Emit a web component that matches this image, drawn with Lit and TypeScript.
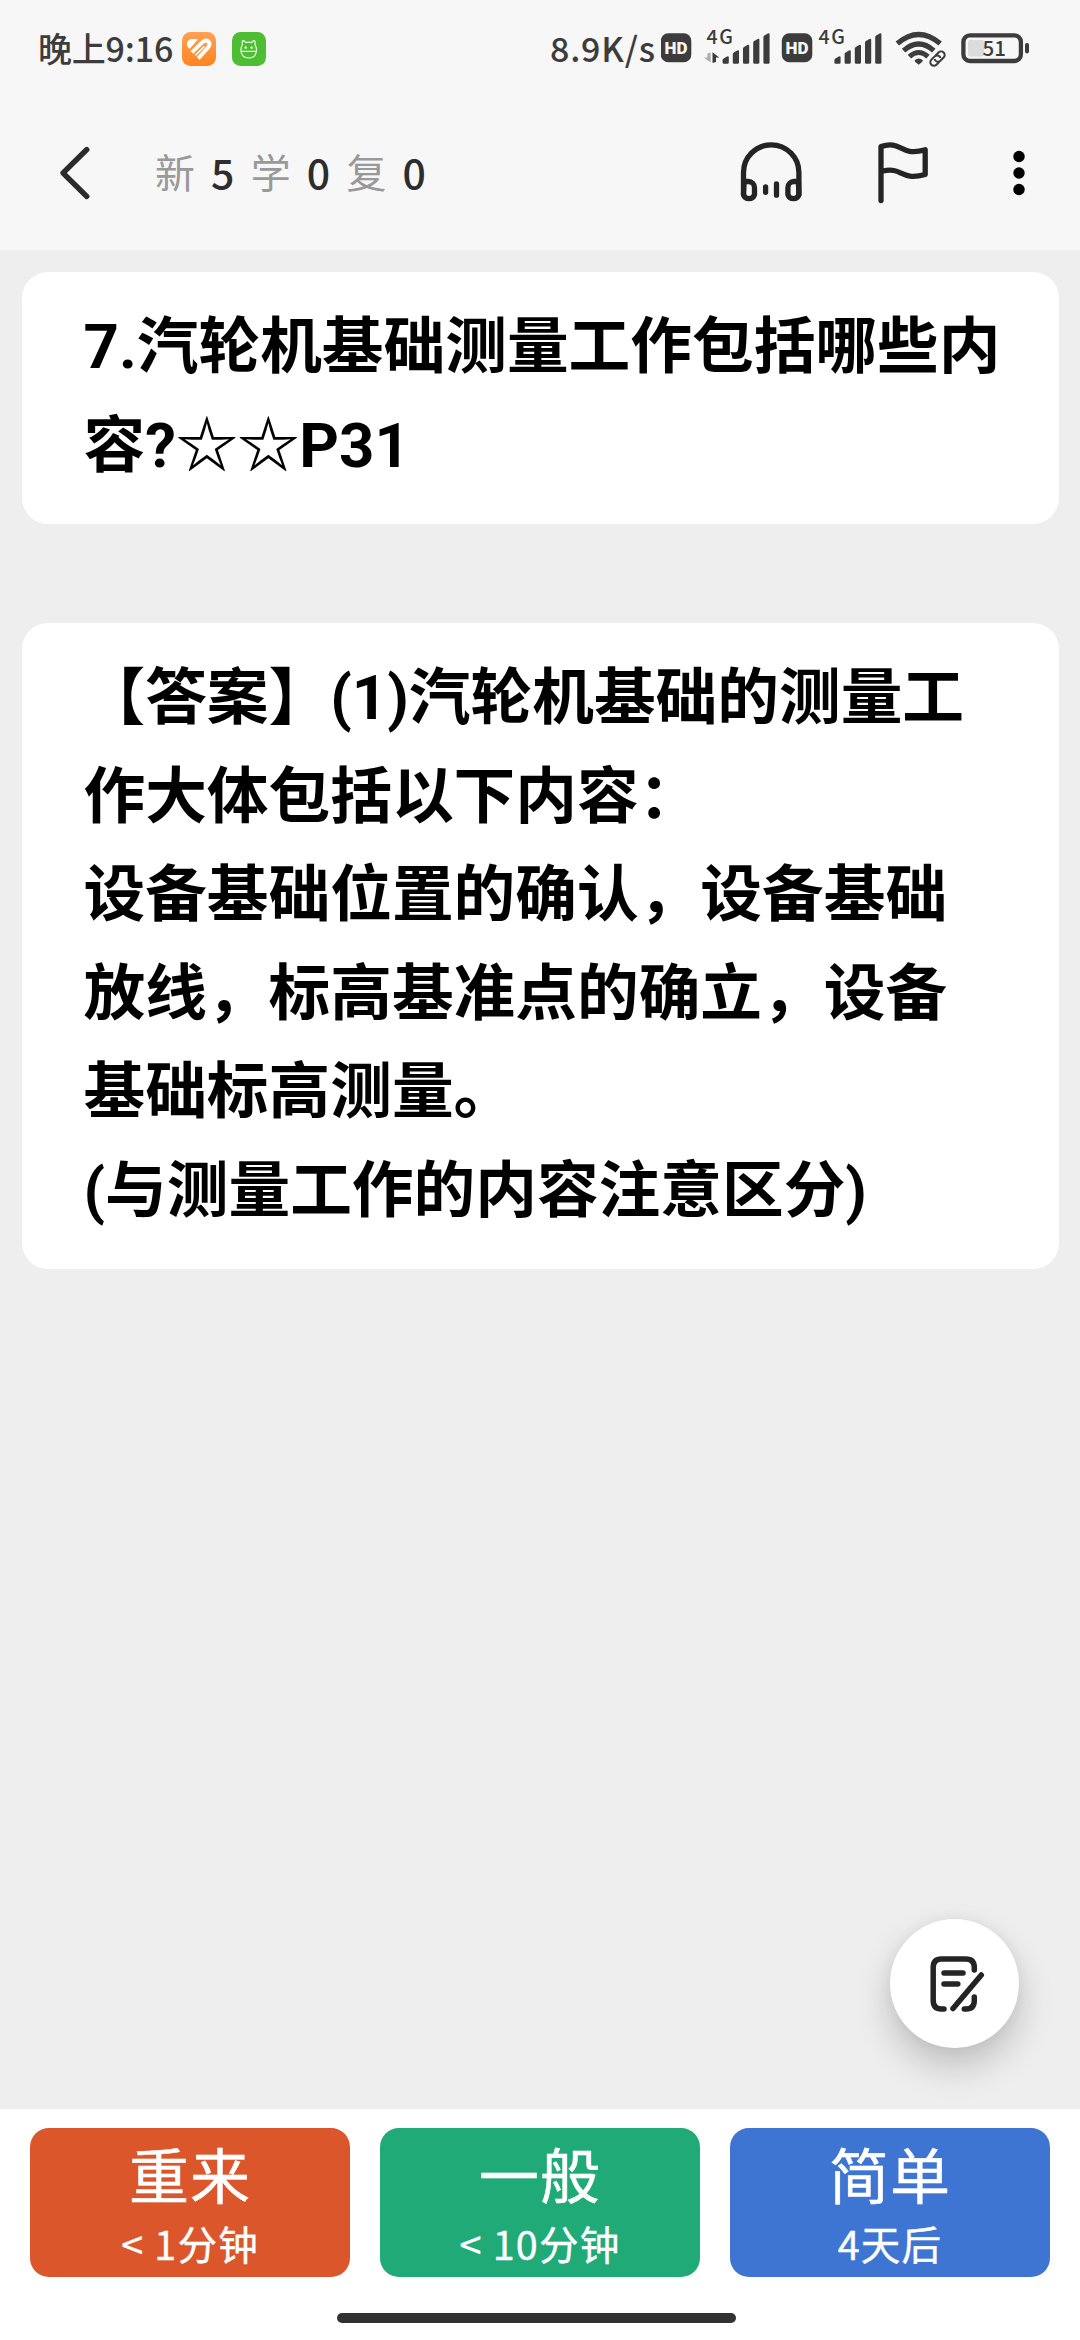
import { LitElement, html, css, svg } from "lit";
import { customElement, property } from "lit/decorators.js";

const BAR_TOPS = [56, 50, 44.5, 38.5, 33];

const signal = (x: number) =>
  BAR_TOPS.map((top, i) => {
    const left = x + i * 10.2;
    return svg`<path d="M${left} 62.5V${top + 4}q0 -1 1 -1.6l3.4 -2q1.8 -0.8 1.8 0.8V62.5q0 1.3 -1.3 1.3h-3.6q-1.3 0 -1.3 -1.3z" />`;
  });

const hd = (x: number) => svg`
  <rect x=${x} y="33.3" width="30.5" height="29" rx="7.5" />
  <text class="hd" x=${x + 15.2} y="53.7" text-anchor="middle">HD</text>
`;

@customElement("status-bar")
class StatusBar extends LitElement {
  static styles = css`
    :host {
      display: flex;
      height: 97px;
      align-items: center;
      color: #3c3c3c;
      font-family: "Noto Sans CJK SC", sans-serif;
    }
    .time {
      width: 144px;
      margin: -2px 0 0 38px;
      font-size: 34px;
      font-weight: 500;
      line-height: 50px;
      letter-spacing: -0.2px;
      white-space: nowrap;
    }
    .app {
      width: 34px;
      height: 34px;
      margin-right: 16px;
      flex: none;
    }
    .right {
      margin-left: auto;
      display: flex;
      align-items: center;
    }
    .speed {
      width: 111px;
      margin-top: -2px;
      font-size: 34px;
      font-weight: 500;
      line-height: 50px;
      letter-spacing: 0.8px;
      white-space: nowrap;
    }
    .icons {
      display: block;
      width: 419px;
      height: 97px;
      flex: none;
      fill: #3c3c3c;
    }
    .hd {
      font-family: Roboto, sans-serif;
      font-size: 17px;
      font-weight: 900;
      fill: #f7f7f7;
    }
    .net {
      font-size: 19.5px;
      font-weight: 500;
      letter-spacing: 1.6px;
    }
    .pct {
      font-size: 20.5px;
      font-weight: 500;
    }
  `;

  render() {
    return html`
      <span class="time">晚上9:16</span>
      <svg class="app" viewBox="0 0 34 34">
        <defs>
          <linearGradient id="orange" x1="0" y1="0" x2="0" y2="1">
            <stop offset="0" stop-color="#ffa155" />
            <stop offset="1" stop-color="#ff851f" />
          </linearGradient>
        </defs>
        <rect width="34" height="34" rx="8.5" fill="url(#orange)" />
        <path d="M5 12.5Q5 7 10.5 7L16 7.3L7.6 17Q5 15 5 12.5z" fill="#fff" />
        <path d="M10 20.3L20.3 10.2Q24.6 7 27 10.2Q28.6 13 25.6 16.2L16.2 26.3" fill="none" stroke="#fff" stroke-width="3.9" />
        <path d="M13.4 23.4L22.4 14.4" fill="none" stroke="#fff" stroke-width="1.6" />
      </svg>
      <svg class="app" viewBox="0 0 34 34">
        <rect width="34" height="34" rx="8.5" fill="#4dbe34" />
        <g fill="none" stroke="#e9ffe2" stroke-width="1.2" stroke-linejoin="round">
          <path d="M10.6 12.5Q9.6 9.4 11 8.6Q12.6 8.6 13.6 10.6Q16.6 9.8 19.6 10.6Q20.8 8.6 22.4 8.6Q23.6 9.4 22.8 12.5Q24.8 15 24.4 19.2Q23.6 25.8 16.8 26Q9.8 25.8 9 19.2Q8.6 15 10.6 12.5z" />
          <path d="M9.2 19.4H24.2M12.4 15.6h2.6M13.7 14.3v2.6M18.4 15.6h2.6M19.7 14.3v2.6" />
        </g>
      </svg>
      <div class="right">
        <span class="speed">8.9K/s</span>
        <svg class="icons" viewBox="661 0 419 97">
          ${hd(660.8)}
          <text class="net" x="706.5" y="44.3">4G</text>
          <path d="M710.6 52.4V62.6L703.8 57.6H707.4V53.5z" fill="#adadad" />
          <path d="M712.5 63V52.2L719.2 57.6H716V62z" />
          ${signal(722.6)}
          ${hd(781.8)}
          <text class="net" x="818.5" y="44.3">4G</text>
          ${signal(834.4)}
          <g fill="none" stroke="#3c3c3c">
            <path d="M897.3 43.6Q918.7 25.4 940.2 43.6" stroke-width="5.2" />
            <path d="M903.6 50.6Q918.7 37.4 933.8 50.6" stroke-width="5.2" />
            <path d="M909.4 56.6Q918.7 48.4 928 56.6" stroke-width="5" />
            <path d="M929 59L938 50L948 56V66H929z" fill="#f7f7f7" stroke="none" />
            <g transform="rotate(-45 937.5 58.6)" stroke-width="2">
              <path d="M936.5 62.2H932.4a3.6 3.6 0 0 1 0 -7.2H937a3.6 3.6 0 0 1 3 5.4" />
              <path d="M938.5 55H942.6a3.6 3.6 0 0 1 0 7.2H938a3.6 3.6 0 0 1 -3 -5.4" />
            </g>
            <rect x="963.4" y="35.4" width="57.5" height="25.6" rx="6.5" stroke-width="4.3" />
          </g>
          <path d="M914.6 60.3Q918.7 56.8 922.8 60.3Q922.8 62 918.7 64.7Q914.6 62 914.6 60.3z" />
          <rect x="968" y="40" width="16" height="16.4" rx="2" fill="#dcdcdc" />
          <rect x="1025" y="43" width="4" height="10.4" rx="1.8" />
          <text class="pct" x="994.2" y="56" text-anchor="middle">51</text>
        </svg>
      </div>
    `;
  }
}

@customElement("study-toolbar")
class StudyToolbar extends LitElement {
  static styles = css`
    :host {
      display: flex;
      height: 152px;
      align-items: center;
      font-family: "Noto Sans CJK SC", sans-serif;
    }
    svg {
      display: block;
      flex: none;
      fill: none;
      stroke: #242424;
      stroke-width: 5.3;
      stroke-linecap: round;
      stroke-linejoin: round;
    }
    .back {
      margin-left: 56px;
      width: 36px;
      height: 60px;
      stroke: #2b2b2b;
    }
    .counts {
      display: flex;
      align-items: center;
      margin: -5px 0 0 63px;
      line-height: 60px;
    }
    .name {
      width: 56px;
      font-size: 40px;
      color: #999;
    }
    .value {
      width: 39.7px;
      font-size: 41px;
      font-weight: 500;
      color: #2d2d2d;
    }
    .phones {
      width: 66px;
      height: 66px;
      margin-left: auto;
    }
    .flag {
      width: 56px;
      height: 66px;
      margin-left: 71px;
    }
    .more {
      width: 14px;
      height: 48px;
      margin: 0 54px 0 81px;
      fill: #000;
      stroke: none;
    }
  `;

  render() {
    const counts = [
      ["新", 5],
      ["学", 0],
      ["复", 0],
    ];
    return html`
      <svg class="back" viewBox="56 143 36 60"><path d="M86.8 149.5L63 173L86.8 196.5" /></svg>
      <div class="counts">
        ${counts.map(([name, value]) => html`<span class="name">${name}</span><span class="value">${value}</span>`)}
      </div>
      <svg class="phones" viewBox="738 140 66 66">
        <path d="M743.5 194.5V172.5a27.7 27.7 0 0 1 55.4 0V194.5" />
        <path d="M744 181.5h4.5a6 6 0 0 1 6 6v7a5.7 5.7 0 0 1 -11 0z" />
        <path d="M798.4 181.5h-4.5a6 6 0 0 0 -6 6v7a5.7 5.7 0 0 0 11 0z" />
        <path d="M765.6 187v5.3M776.5 184v11.2" />
      </svg>
      <svg class="flag" viewBox="875 140 56 66">
        <path d="M881 200.5V146.6C902 139.5 899 157 925.2 149.8V174.5C900 181.5 903 166.5 883 171" />
      </svg>
      <svg class="more" viewBox="1012 149 14 48">
        <circle cx="1019" cy="156.5" r="5.7" />
        <circle cx="1019" cy="173" r="5.7" />
        <circle cx="1019" cy="189.5" r="5.7" />
      </svg>
    `;
  }
}

@customElement("flash-card")
class FlashCard extends LitElement {
  static styles = css`
    :host {
      display: block;
      padding: 26px 50px 29px 61.5px;
      border-radius: 26px;
      background: #fff;
      color: #000;
      font-family: Roboto, "Noto Sans CJK SC", sans-serif;
      font-size: 61.7px;
      font-weight: 700;
      line-height: 98.5px;
      text-spacing-trim: space-all;
    }
    .line {
      white-space: nowrap;
    }
  `;
  @property({ attribute: false }) lines: string[] = [];

  render() {
    return this.lines.map((line) => html`<div class="line">${line}</div>`);
  }
}

@customElement("grade-button")
class GradeButton extends LitElement {
  static styles = css`
    :host {
      display: flex;
      flex-direction: column;
      align-items: center;
      height: 149px;
      border-radius: 19px;
      color: #fff;
      font-family: "Noto Sans CJK SC", sans-serif;
      white-space: pre;
    }
    .label {
      margin-top: 5px;
      font-size: 60px;
      line-height: 80px;
      letter-spacing: 1px;
      -webkit-text-stroke: 0.5px #fff;
    }
    .due {
      margin-top: 3px;
      font-size: 39.5px;
      line-height: 54px;
      letter-spacing: 1.2px;
      -webkit-text-stroke: 0.4px #fff;
    }
  `;
  @property() label = "";
  @property() due = "";

  render() {
    return html`<span class="label">${this.label}</span><span class="due">${this.due}</span>`;
  }
}

@customElement("app-root")
class AppRoot extends LitElement {
  static styles = css`
    :host {
      display: flex;
      flex-direction: column;
      position: relative;
      height: 2340px;
      background: #eee;
      overflow: hidden;
    }
    .top {
      height: 250px;
      background: #f7f7f7;
    }
    .cards {
      flex: 1;
      display: flex;
      flex-direction: column;
      gap: 99px;
      padding: 22px 21px 0 22px;
    }
    .bottom {
      position: relative;
      height: 231px;
      box-sizing: border-box;
      padding-top: 19px;
      background: #fff;
    }
    .grades {
      display: grid;
      grid-template-columns: repeat(3, 1fr);
      gap: 30px;
      padding: 0 30px;
    }
    .again { background: #dc562b; }
    .good { background: #20aa77; }
    .easy { background: #3e75d2; }
    .home {
      width: 399px;
      height: 10px;
      margin: 36px 0 0 337px;
      border-radius: 5px;
      background: #323232;
    }
    .fab {
      position: absolute;
      right: 61px;
      bottom: 292px;
      width: 129px;
      height: 129px;
      border-radius: 50%;
      background: #fff;
      box-shadow: 0 18px 36px rgba(0, 0, 0, 0.2), 0 0 14px rgba(0, 0, 0, 0.05);
    }
    .fab svg {
      display: block;
      width: 129px;
      height: 129px;
      fill: none;
      stroke: #242424;
      stroke-width: 5.5;
      stroke-linecap: round;
      stroke-linejoin: round;
    }
  `;

  render() {
    return html`
      <header class="top">
        <status-bar></status-bar>
        <study-toolbar></study-toolbar>
      </header>
      <main class="cards">
        <flash-card .lines=${["7.汽轮机基础测量工作包括哪些内", "容?☆☆P31"]}></flash-card>
        <flash-card
          .lines=${[
            "【答案】(1)汽轮机基础的测量工",
            "作大体包括以下内容：",
            "设备基础位置的确认，设备基础",
            "放线，标高基准点的确立，设备",
            "基础标高测量。",
            "(与测量工作的内容注意区分)",
          ]}
        ></flash-card>
      </main>
      <div class="fab">
        <svg viewBox="890 1919 129 129">
          <path d="M944 2009H941.5Q933.2 2009 933.2 2000.5V1967.5Q933.2 1959 941.5 1959H965.8Q974.3 1959 974.3 1967.5V1970" />
          <path d="M944 1973H963M944 1984H957.8M981.3 1975L953 2008.6" />
          <path d="M974.3 1997V2000.5Q974.3 2009 966 2009H964.3" />
        </svg>
      </div>
      <footer class="bottom">
        <div class="grades">
          <grade-button class="again" label="重来" due="< 1分钟"></grade-button>
          <grade-button class="good" label="一般" due="< 10分钟"></grade-button>
          <grade-button class="easy" label="简单" due="4天后"></grade-button>
        </div>
        <div class="home"></div>
      </footer>
    `;
  }
}
